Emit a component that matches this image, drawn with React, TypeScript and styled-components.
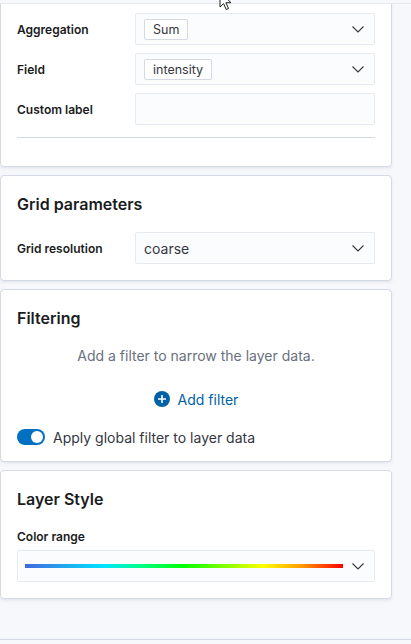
import React from "react";
import styled, { createGlobalStyle } from "styled-components";

const GlobalStyle = createGlobalStyle`
  html, body {
    margin: 0;
    padding: 0;
    background: #f7f8fc;
  }
  body {
    font-family: Inter, "Noto Sans", "Liberation Sans", sans-serif;
    color: #1a1c21;
  }
  * {
    box-sizing: border-box;
  }
`;

const Page = styled.div`
  position: relative;
  height: 644px;
  display: flex;
  flex-direction: column;
  background: #f7f8fc;
  overflow: hidden;
`;

const TopEdge = styled.div`
  height: 4px;
  flex-shrink: 0;
  border-bottom: 1px solid #e3e7ef;
`;

const ScrollArea = styled.div`
  flex: 1;
  overflow: hidden;
`;

const Content = styled.div<{ offset: number }>`
  margin-top: ${({ offset }) => -offset}px;
  display: flex;
  flex-direction: column;
  gap: 8px;
  width: 392px;
`;

const Footer = styled.div`
  height: 5px;
  flex-shrink: 0;
  border-top: 1px solid #d3dae6;
`;

const Card = styled.section<{ padBottom?: number }>`
  background: #fff;
  border: 1px solid #d3dae6;
  border-radius: 4px;
  box-shadow: 0 1px 2px rgba(0, 0, 0, 0.04), 0 2px 4px rgba(152, 162, 179, 0.12);
  padding: 16px 16px ${({ padBottom }) => padBottom ?? 16}px;
  display: flex;
  flex-direction: column;
`;

const Title = styled.h3`
  margin: 0;
  font-size: 16px;
  line-height: 24px;
  font-weight: 600;
  color: #1a1c21;
`;

const FormRow = styled.div<{ top?: number }>`
  display: flex;
  align-items: center;
  margin-top: ${({ top }) => top ?? 0}px;
`;

const RowLabel = styled.label`
  width: 118px;
  flex-shrink: 0;
  font-size: 12px;
  font-weight: 600;
  color: #1a1c21;
`;

const StackLabel = styled.label`
  display: block;
  margin-top: 17px;
  margin-bottom: 4px;
  font-size: 12px;
  line-height: 18px;
  font-weight: 600;
  color: #1a1c21;
`;

const SelectBox = styled.div<{ tight?: boolean }>`
  flex: 1;
  height: 32px;
  display: flex;
  align-items: center;
  padding: 0 10px 0 ${({ tight }) => (tight ? 7 : 8)}px;
  background: #fbfcfd;
  border: 1px solid #e6eaf1;
  border-radius: 2px;
  font-size: 14px;
  color: #343741;
`;

const SelectValue = styled.span`
  flex: 1;
  display: flex;
  align-items: center;
`;

const Pill = styled.span`
  display: inline-flex;
  align-items: center;
  height: 21px;
  padding: 0 8px;
  background: #fff;
  border: 1px solid #d3dae6;
  border-radius: 2px;
  font-size: 12.5px;
  color: #343741;
`;

const Divider = styled.hr`
  border: none;
  border-top: 1px solid #d3dae6;
  margin: 12px 0 12px;
`;

const Description = styled.p`
  margin: 16px 0 0;
  text-align: center;
  font-size: 14px;
  line-height: 20px;
  color: #69707d;
`;

const AddButton = styled.button`
  align-self: center;
  margin-top: 17px;
  height: 32px;
  display: flex;
  align-items: center;
  gap: 8px;
  padding: 0 4px;
  border: none;
  background: none;
  font-family: inherit;
  font-size: 14px;
  color: #0061a6;
  cursor: pointer;
`;

const ToggleRow = styled.div`
  margin-top: 12px;
  height: 20px;
  display: flex;
  align-items: center;
  gap: 8px;
  font-size: 14px;
  color: #343741;
`;

const Switch = styled.span<{ on: boolean }>`
  position: relative;
  width: 28px;
  height: 16px;
  border-radius: 8px;
  background: ${({ on }) => (on ? "#0071c2" : "#98a2b3")};
  flex-shrink: 0;
  &::after {
    content: "";
    position: absolute;
    top: 2px;
    left: ${({ on }) => (on ? "14px" : "2px")};
    width: 12px;
    height: 12px;
    border-radius: 50%;
    background: #fff;
  }
`;

const Gradient = styled.span`
  flex: 1;
  height: 4px;
  margin-right: 9px;
  background: linear-gradient(
    to right,
    #4169e1 0%,
    #00e5ff 25%,
    #00ff80 37%,
    #00ff00 50%,
    #ffff00 75%,
    #ff9900 87%,
    #ff0000 100%
  );
`;

const Cursor = styled.svg`
  position: absolute;
  left: 219px;
  top: -9px;
`;

const Chevron = () => (
  <svg width="12" height="7" viewBox="0 0 12 7">
    <path d="M0.5 0.5l5.5 5.5 5.5-5.5" fill="none" stroke="#343741" strokeWidth="1.1" />
  </svg>
);

const PlusIcon = () => (
  <svg width="16" height="16" viewBox="0 0 16 16">
    <circle cx="8" cy="8" r="8" fill="#0061a6" />
    <path d="M8 4v8M4 8h8" stroke="#fff" strokeWidth="1.6" />
  </svg>
);

export default function App() {
  return (
    <Page>
      <GlobalStyle />
      <TopEdge />
      <ScrollArea>
        <Content offset={8}>
          <Card padBottom={16}>
            <FormRow>
              <RowLabel>Aggregation</RowLabel>
              <SelectBox>
                <SelectValue>
                  <Pill>Sum</Pill>
                </SelectValue>
                <Chevron />
              </SelectBox>
            </FormRow>
            <FormRow top={8}>
              <RowLabel>Field</RowLabel>
              <SelectBox>
                <SelectValue>
                  <Pill>intensity</Pill>
                </SelectValue>
                <Chevron />
              </SelectBox>
            </FormRow>
            <FormRow top={8}>
              <RowLabel>Custom label</RowLabel>
              <SelectBox />
            </FormRow>
            <Divider />
          </Card>

          <Card>
            <Title>Grid parameters</Title>
            <FormRow top={16}>
              <RowLabel>Grid resolution</RowLabel>
              <SelectBox>
                <SelectValue>coarse</SelectValue>
                <Chevron />
              </SelectBox>
            </FormRow>
          </Card>

          <Card padBottom={14}>
            <Title>Filtering</Title>
            <Description>Add a filter to narrow the layer data.</Description>
            <AddButton>
              <PlusIcon />
              Add filter
            </AddButton>
            <ToggleRow>
              <Switch on />
              Apply global filter to layer data
            </ToggleRow>
          </Card>

          <Card>
            <Title>Layer Style</Title>
            <StackLabel>Color range</StackLabel>
            <FormRow>
              <SelectBox tight>
                <Gradient />
                <Chevron />
              </SelectBox>
            </FormRow>
          </Card>
        </Content>
      </ScrollArea>
      <Footer />
      <Cursor width="14" height="20" viewBox="0 0 14 20">
        <path
          d="M1 1v15l3.6-3.4 2.6 5.9 2.3-1-2.6-5.8H12z"
          fill="#fff"
          stroke="#222"
          strokeWidth="1"
          strokeLinejoin="round"
        />
      </Cursor>
    </Page>
  );
}
